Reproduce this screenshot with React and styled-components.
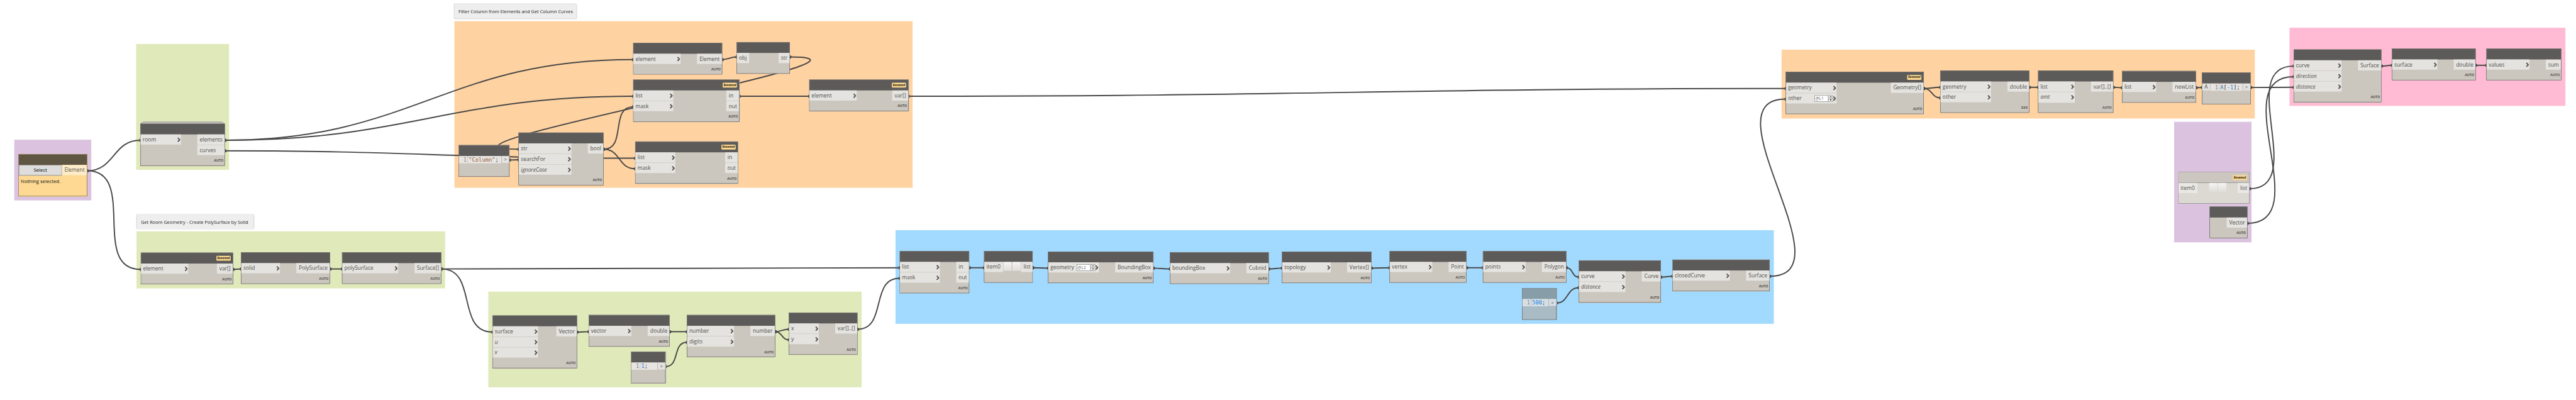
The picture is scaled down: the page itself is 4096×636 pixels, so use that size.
import React from "react";
import styled, { createGlobalStyle, css } from "styled-components";

const BOARD_W = 6320;
const BOARD_H = 982;

const GlobalStyle = createGlobalStyle`
  html, body { margin: 0; padding: 0; background: #fff; overflow: hidden; }
  * { box-sizing: border-box; }
`;

const Viewport = styled.main`
  width: 4096px;
  height: 636px;
  overflow: hidden;
  background: #fff;
`;

const Board = styled.div`
  position: relative;
  width: ${BOARD_W}px;
  height: ${BOARD_H}px;
  transform: scale(${4096 / BOARD_W}, ${636 / BOARD_H});
  transform-origin: 0 0;
  font-family: "Open Sans", "Noto Sans", sans-serif;
  font-size: 13px;
  color: #504e4c;
  white-space: nowrap;
`;

const Group = styled.section`
  position: absolute;
  left: ${(p) => p.$x}px;
  top: ${(p) => p.$y}px;
  width: ${(p) => p.$w}px;
  height: ${(p) => p.$h}px;
  background: ${(p) => p.$color};
`;

const Note = styled.div`
  position: absolute;
  left: ${(p) => p.$x}px;
  top: ${(p) => p.$y}px;
  width: ${(p) => p.$w}px;
  height: 35px;
  padding-left: ${(p) => p.$pad}px;
  display: flex;
  align-items: center;
  background: #eeeeee;
  border-radius: 2px;
  box-shadow: 0 0 3px rgba(0, 0, 0, 0.22);
  color: #1c1c1c;
  font-size: 11.4px;
`;

const Wires = styled.svg`
  position: absolute;
  inset: 0;
  width: ${BOARD_W}px;
  height: ${BOARD_H}px;
  path { fill: none; stroke: #484848; stroke-width: 3; }
  circle { fill: #484848; }
`;

const palettes = {
  normal: { line: "#5d5b59", header: "#5d5b59", body: "#cbc6be", port: "#e4e3df", editor: "#e7e4e1" },
  frozen: { line: "#7d7c7a", header: "#cbc6bf", body: "#dbd9d1", port: "#e9e8e5", editor: "#e9e8e5" },
  tinted: { line: "#5d5b59", header: "#879da8", body: "#a9bbc4", port: "#d6dfe5", editor: "#d6dfe5" },
  warm: { line: "#5e5642", header: "#5e5642", body: "#fdd993", port: "#feecc8", editor: "#feecc8" },
};

const NodeBox = styled.article`
  position: absolute;
  left: ${(p) => p.$x}px;
  top: ${(p) => p.$y}px;
  width: ${(p) => p.$w}px;
  border: 1px solid ${(p) => p.$palette.line};
  background: ${(p) => p.$palette.body};
  display: flex;
  flex-direction: column;
`;

const Header = styled.header`
  height: 26px;
  padding: 7px 5px 0 0;
  display: flex;
  justify-content: flex-end;
  align-items: flex-start;
  background: ${(p) => p.$palette.header};
  ${(p) => p.$ruled && css`border-bottom: 1px solid ${p.$palette.line};`}
`;

const Renamed = styled.span`
  width: 35px;
  height: 12px;
  display: flex;
  align-items: center;
  justify-content: center;
  border-radius: 2px;
  background: #fdda92;
  color: #1e1a10;
  font-size: 6.9px;
  font-weight: 700;
  font-style: italic;
  line-height: 12px;
`;

const Ports = styled.div`
  display: flex;
  justify-content: space-between;
  align-items: flex-start;
`;

const Column = styled.div`
  width: ${(p) => p.$w}px;
  display: flex;
  flex-direction: column;
  gap: 1px;
`;

const Port = styled.div`
  height: 25px;
  padding: 0 1px 0 ${(p) => (p.$out ? 6 : 5)}px;
  display: flex;
  align-items: center;
  background: ${(p) => p.$palette.port};
  font-style: ${(p) => (p.$optional ? "italic" : "normal")};
  line-height: 25px;
`;

const Chevron = styled.svg`
  width: 8px;
  height: 12px;
  margin-left: auto;
  flex: none;
  path { fill: none; stroke: #565452; stroke-width: 2.9; }
`;

const Footer = styled.footer`
  height: 25px;
  padding: 0 3px 0 0;
  display: flex;
  align-items: center;
  justify-content: flex-end;
  font-size: 8.3px;
  font-weight: 700;
  letter-spacing: -0.15px;
  line-height: 25px;
`;

const Level = styled.span`
  width: 45px;
  height: 16px;
  margin-left: auto;
  display: flex;
  border: 1px solid #7c7c7c;
  background: #fff;
  color: #6d6d6d;
  font-size: 10.2px;
  line-height: 14px;
  padding-left: 1px;
  & + svg { margin-left: 0; }
`;

const Spin = styled.span`
  margin-left: auto;
  width: 11px;
  display: grid;
  grid-template-rows: 1fr 1fr;
  gap: 1px;
  background: #8a8a8a;
  border-left: 1px solid #8a8a8a;
`;

const SpinButton = styled.span`
  display: flex;
  align-items: center;
  justify-content: center;
  background: #e6e6e4;
  svg { width: 5px; height: 3px; fill: #111; }
`;

const ItemButtons = styled.div`
  display: flex;
  gap: 2px;
`;

const ItemButton = styled.span`
  width: 20px;
  height: 22px;
  background: linear-gradient(#f6f5f4, #dfddd9);
`;

const CodeRow = styled.div`
  height: 25px;
  display: flex;
  align-items: flex-start;
`;

const CodePort = styled.span`
  width: ${(p) => p.$w}px;
  height: 17px;
  display: flex;
  align-items: center;
  justify-content: center;
  background: ${(p) => p.$palette.port};
  line-height: 17px;
  font-size: ${(p) => (p.$arrow ? 12 : 13)}px;
  border-left: ${(p) => (p.$arrow ? "1px solid #a3a19e" : "0")};
  border-right: ${(p) => (p.$arrow ? "0" : "1px solid #a3a19e")};
`;

const Editor = styled.code`
  flex: 1;
  height: 18px;
  display: flex;
  background: ${(p) => p.$palette.editor};
  color: #3c3c3c;
  font-family: "DejaVu Sans Mono", monospace;
  font-size: 13.5px;
  line-height: 18px;
`;

const LineNumber = styled.span`
  width: 22px;
  padding-right: 2px;
  text-align: right;
  color: #8a8a88;
  border-right: 1px dotted #9a9a98;
  margin-right: 2px;
`;

const Token = styled.span`
  color: ${(p) => ({ string: "#96613f", number: "#2484e4", name: "#3f7c99" }[p.$kind] || "#3c3c3c")};
`;

const SelectRow = styled.div`
  display: flex;
  height: 25px;
`;

const SelectButton = styled.button`
  flex: 1;
  height: 26px;
  padding: 0;
  border: 1px solid #707070;
  background: #dddddd;
  color: #000;
  font: 12px/24px "Open Sans", sans-serif;
`;

const SelectionText = styled.p`
  height: 51px;
  margin: 0;
  padding: 7px 0 0 5px;
  color: #111;
  font-size: 12px;
  line-height: 16px;
`;

const LacingEdge = styled.div`
  position: absolute;
  left: ${(p) => p.$x}px;
  top: ${(p) => p.$y}px;
  width: ${(p) => p.$w}px;
  height: 6px;
  border: 1px solid ${(p) => p.$line};
  background: #dcd8d4;
`;

const groups = [
  [35, 343, 189, 149, "#dbc3e0"],
  [334, 108, 228, 309, "#e0e9ba"],
  [1115, 52, 1124, 409, "#ffd2a1"],
  [335, 568, 757, 140, "#e0e9ba"],
  [1198, 716, 916, 235, "#e0e9ba"],
  [2197, 565, 2155, 230, "#a2daff"],
  [4371, 122, 1161, 169, "#ffd2a1"],
  [5334, 299, 190, 296, "#dbc3e0"],
  [5617, 68, 677, 192, "#ffbbd4"],
];

// Port labels starting with "*" have a default value and are set in italics.
const nodes = {
  room: { x: 344, y: 303, w: 208, inW: 99, outW: 67, ins: ["room"], outs: ["elements", "curves"] },
  elementName: { x: 1553, y: 105, w: 219, inW: 116, outW: 61, ins: ["element"], outs: ["Element"] },
  toString: { x: 1807, y: 103, w: 131, inW: 30, outW: 27, ins: ["obj"], outs: ["str"], plain: true, status: "" },
  maskColumns: { x: 1553, y: 195, w: 261, inW: 98, outW: 31, ins: ["list", "mask"], outs: ["in", "out"], renamed: true },
  curvesOf: { x: 1985, y: 195, w: 244, inW: 116, outW: 39, ins: ["element"], outs: ["var[]"], renamed: true },
  contains: { x: 1272, y: 325, w: 209, inW: 129, outW: 38, ins: ["str", "searchFor", "*ignoreCase"], outs: ["bool"] },
  maskCurves: { x: 1558, y: 347, w: 253, inW: 98, outW: 31, ins: ["list", "mask"], outs: ["in", "out"], renamed: true },
  roomGeometry: { x: 345, y: 620, w: 227, inW: 116, outW: 39, ins: ["element"], outs: ["var[]"], renamed: true },
  solid: { x: 591, y: 619, w: 219, inW: 95, outW: 82, ins: ["solid"], outs: ["PolySurface"] },
  polySurface: { x: 839, y: 619, w: 244, inW: 137, outW: 65, ins: ["polySurface"], outs: ["Surface[]"] },
  normal: { x: 1208, y: 774, w: 208, inW: 111, outW: 50, ins: ["surface", "*u", "*v"], outs: ["Vector"] },
  vectorZ: { x: 1444, y: 773, w: 199, inW: 104, outW: 53, ins: ["vector"], outs: ["double"] },
  round: { x: 1685, y: 773, w: 217, inW: 115, outW: 60, ins: ["number", "digits"], outs: ["number"] },
  equals: { x: 1935, y: 767, w: 169, inW: 73, outW: 54, ins: ["x", "y"], outs: ["var[]..[]"] },
  maskSurfaces: { x: 2207, y: 616, w: 171, inW: 98, outW: 31, ins: ["list", "mask"], outs: ["in", "out"] },
  listCreate: { x: 2414, y: 616, w: 120, inW: 46, outW: 28, ins: ["item0"], outs: ["list"], plain: true, items: true, status: "" },
  bounding: { x: 2571, y: 617, w: 259, inW: 124, outW: 93, ins: ["geometry"], outs: ["BoundingBox"], level: [0, "@L2"] },
  cuboid: { x: 2870, y: 619, w: 243, inW: 147, outW: 54, ins: ["boundingBox"], outs: ["Cuboid"] },
  vertices: { x: 3145, y: 617, w: 220, inW: 119, outW: 59, ins: ["topology"], outs: ["Vertex[]"] },
  vertex: { x: 3409, y: 616, w: 189, inW: 104, outW: 43, ins: ["vertex"], outs: ["Point"] },
  polygon: { x: 3638, y: 616, w: 205, inW: 104, outW: 59, ins: ["points"], outs: ["Polygon"] },
  offset: { x: 3873, y: 639, w: 202, inW: 114, outW: 46, ins: ["curve", "*distance"], outs: ["Curve"] },
  patch: { x: 4103, y: 637, w: 239, inW: 140, outW: 57, ins: ["closedCurve"], outs: ["Surface"] },
  intersect: { x: 4381, y: 176, w: 339, inW: 124, outW: 80, ins: ["geometry", "other"], outs: ["Geometry[]"], renamed: true, level: [1, "@L1"] },
  distanceTo: { x: 4760, y: 173, w: 219, inW: 124, outW: 53, ins: ["geometry", "other"], outs: ["double"], status: "XXX" },
  flatten: { x: 5000, y: 173, w: 185, inW: 89, outW: 54, ins: ["list", "*amt"], outs: ["var[]..[]"] },
  sort: { x: 5206, y: 174, w: 182, inW: 83, outW: 57, ins: ["list"], outs: ["newList"] },
  extrude: { x: 5627, y: 121, w: 216, inW: 117, outW: 57, ins: ["curve", "*direction", "*distance"], outs: ["Surface"] },
  area: { x: 5868, y: 119, w: 206, inW: 111, outW: 53, ins: ["surface"], outs: ["double"] },
  sum: { x: 6100, y: 119, w: 184, inW: 105, outW: 37, ins: ["values"], outs: ["sum"] },
  frozenList: { x: 5344, y: 422, w: 175, inW: 46, outW: 28, ins: ["item0"], outs: ["list"], plain: true, items: true, status: "", renamed: true, look: "frozen" },
  zAxis: { x: 5421, y: 507, w: 93, inW: 0, outW: 50, ins: [], outs: ["Vector"] },
};

const codeBlocks = {
  codeColumn: { x: 1125, y: 356, w: 125, code: [["string", '"Column"'], ["", ";"]] },
  codeOne: { x: 1548, y: 863, w: 85, code: [["number", "1"], ["", ";"]] },
  codeOffset: { x: 3734, y: 707, w: 85, look: "tinted", code: [["number", "500"], ["", ";"]] },
  codeLast: { x: 5402, y: 178, w: 120, input: "A", code: [["name", "A"], ["", "["], ["number", "-1"], ["", "];"]] },
};

const wires = [
  ["select", 0, "room", 0],
  ["select", 0, "roomGeometry", 0],
  ["room", 0, "elementName", 0],
  ["room", 0, "maskColumns", 0],
  ["room", 1, "maskCurves", 0],
  ["elementName", 0, "toString", 0],
  ["toString", 0, "contains", 0],
  ["codeColumn", 0, "contains", 1],
  ["contains", 0, "maskColumns", 1],
  ["contains", 0, "maskCurves", 1],
  ["maskColumns", 0, "curvesOf", 0],
  ["curvesOf", 0, "intersect", 0],
  ["roomGeometry", 0, "solid", 0],
  ["solid", 0, "polySurface", 0],
  ["polySurface", 0, "maskSurfaces", 0],
  ["polySurface", 0, "normal", 0],
  ["normal", 0, "vectorZ", 0],
  ["vectorZ", 0, "round", 0],
  ["codeOne", 0, "round", 1],
  ["round", 0, "equals", 0],
  ["round", 0, "equals", 1],
  ["equals", 0, "maskSurfaces", 1],
  ["maskSurfaces", 0, "listCreate", 0],
  ["listCreate", 0, "bounding", 0],
  ["bounding", 0, "cuboid", 0],
  ["cuboid", 0, "vertices", 0],
  ["vertices", 0, "vertex", 0],
  ["vertex", 0, "polygon", 0],
  ["polygon", 0, "offset", 0],
  ["codeOffset", 0, "offset", 1],
  ["offset", 0, "patch", 0],
  ["patch", 0, "intersect", 1],
  ["intersect", 0, "distanceTo", 0],
  ["intersect", 0, "distanceTo", 1],
  ["distanceTo", 0, "flatten", 0],
  ["flatten", 0, "sort", 0],
  ["sort", 0, "codeLast", 0],
  ["codeLast", 0, "extrude", 2],
  ["frozenList", 0, "extrude", 0],
  ["zAxis", 0, "extrude", 1],
  ["extrude", 0, "area", 0],
  ["area", 0, "sum", 0],
];

const boxOf = (id) => (id === "select" ? { x: 45, y: 378, w: 169 } : nodes[id] || codeBlocks[id]);
const portY = (id, row) => boxOf(id).y + (codeBlocks[id] ? 36.8 : 41.3 + row * 26);

function Wire({ from, fromRow, to, toRow }) {
  const a = boxOf(from);
  const x1 = a.x + a.w;
  const y1 = portY(from, fromRow);
  const x2 = boxOf(to).x;
  const y2 = portY(to, toRow);
  const pull = 0.45 * Math.hypot(x2 - x1, y2 - y1);
  return (
    <g>
      <path d={`M${x1} ${y1}C${x1 + pull} ${y1} ${x2 - pull} ${y2} ${x2} ${y2}`} />
      <circle cx={x1} cy={y1} r="4" />
      <circle cx={x2 + 1} cy={y2} r="4" />
    </g>
  );
}

function LevelSpinner({ value }) {
  return (
    <Level>
      {value}
      <Spin>
        <SpinButton><svg viewBox="0 0 6 4"><path d="M0 4L3 0L6 4Z" /></svg></SpinButton>
        <SpinButton><svg viewBox="0 0 6 4"><path d="M0 0L3 4L6 0Z" /></svg></SpinButton>
      </Spin>
    </Level>
  );
}

function GraphNode({ x, y, w, inW, outW, ins, outs, plain, items, renamed, level, look = "normal", status = "AUTO" }) {
  const palette = palettes[look];
  return (
    <NodeBox $x={x} $y={y} $w={w} $palette={palette}>
      <Header $palette={palette} $ruled={look === "frozen"}>{renamed && <Renamed>Renamed</Renamed>}</Header>
      <Ports>
        <Column $w={inW}>
          {ins.map((label, i) => (
            <Port key={label} $palette={palette} $optional={label[0] === "*"}>
              {label.replace("*", "")}
              {level && level[0] === i && <LevelSpinner value={level[1]} />}
              {!plain && (
                <Chevron viewBox="0 0 8 12"><path d="M1.3 1.2L5.9 6L1.3 10.8" /></Chevron>
              )}
            </Port>
          ))}
        </Column>
        {items && <ItemButtons><ItemButton /><ItemButton /></ItemButtons>}
        <Column $w={outW}>
          {outs.map((label) => <Port key={label} $out $palette={palette}>{label}</Port>)}
        </Column>
      </Ports>
      <Footer>{status}</Footer>
    </NodeBox>
  );
}

function CodeBlock({ x, y, w, input, code, look = "normal" }) {
  const palette = palettes[look];
  return (
    <NodeBox $x={x} $y={y} $w={w} $palette={palette}>
      <Header $palette={palette} />
      <CodeRow>
        {input && <CodePort $w={20} $palette={palette}>{input}</CodePort>}
        <Editor $palette={palette}>
          <LineNumber>1</LineNumber>
          {code.map(([kind, text]) => <Token key={text} $kind={kind}>{text}</Token>)}
        </Editor>
        <CodePort $w={19} $arrow $palette={palette}>&gt;</CodePort>
      </CodeRow>
      <Footer />
    </NodeBox>
  );
}

function SelectNode() {
  const palette = palettes.warm;
  return (
    <NodeBox $x={45} $y={378} $w={169} $palette={palette}>
      <Header $palette={palette} />
      <SelectRow>
        <SelectButton>Select</SelectButton>
        <Column $w={61}><Port $out $palette={palette}>Element</Port></Column>
      </SelectRow>
      <SelectionText>Nothing selected.</SelectionText>
    </NodeBox>
  );
}

export default function App() {
  return (
    <>
      <GlobalStyle />
      <Viewport>
        <Board>
          {groups.map(([x, y, w, h, color]) => (
            <Group key={`${x}-${y}`} $x={x} $y={y} $w={w} $h={h} $color={color} />
          ))}
          <Note $x={1115} $y={10} $w={299} $pad={10}>Filter Column from Elements and Get Column Curves</Note>
          <Note $x={336} $y={527} $w={286} $pad={10}>Get Room Geometry - Create PolySurface by Solid</Note>
          <Wires viewBox={`0 0 ${BOARD_W} ${BOARD_H}`}>
            {wires.map(([from, fromRow, to, toRow]) => (
              <Wire key={from + fromRow + to + toRow} from={from} fromRow={fromRow} to={to} toRow={toRow} />
            ))}
          </Wires>
          <LacingEdge $x={352} $y={298} $w={192} $line="#aaa9a4" />
          <LacingEdge $x={348} $y={300} $w={200} $line="#7f7e7b" />
          <SelectNode />
          {Object.entries(nodes).map(([id, node]) => <GraphNode key={id} {...node} />)}
          {Object.entries(codeBlocks).map(([id, block]) => <CodeBlock key={id} {...block} />)}
        </Board>
      </Viewport>
    </>
  );
}
